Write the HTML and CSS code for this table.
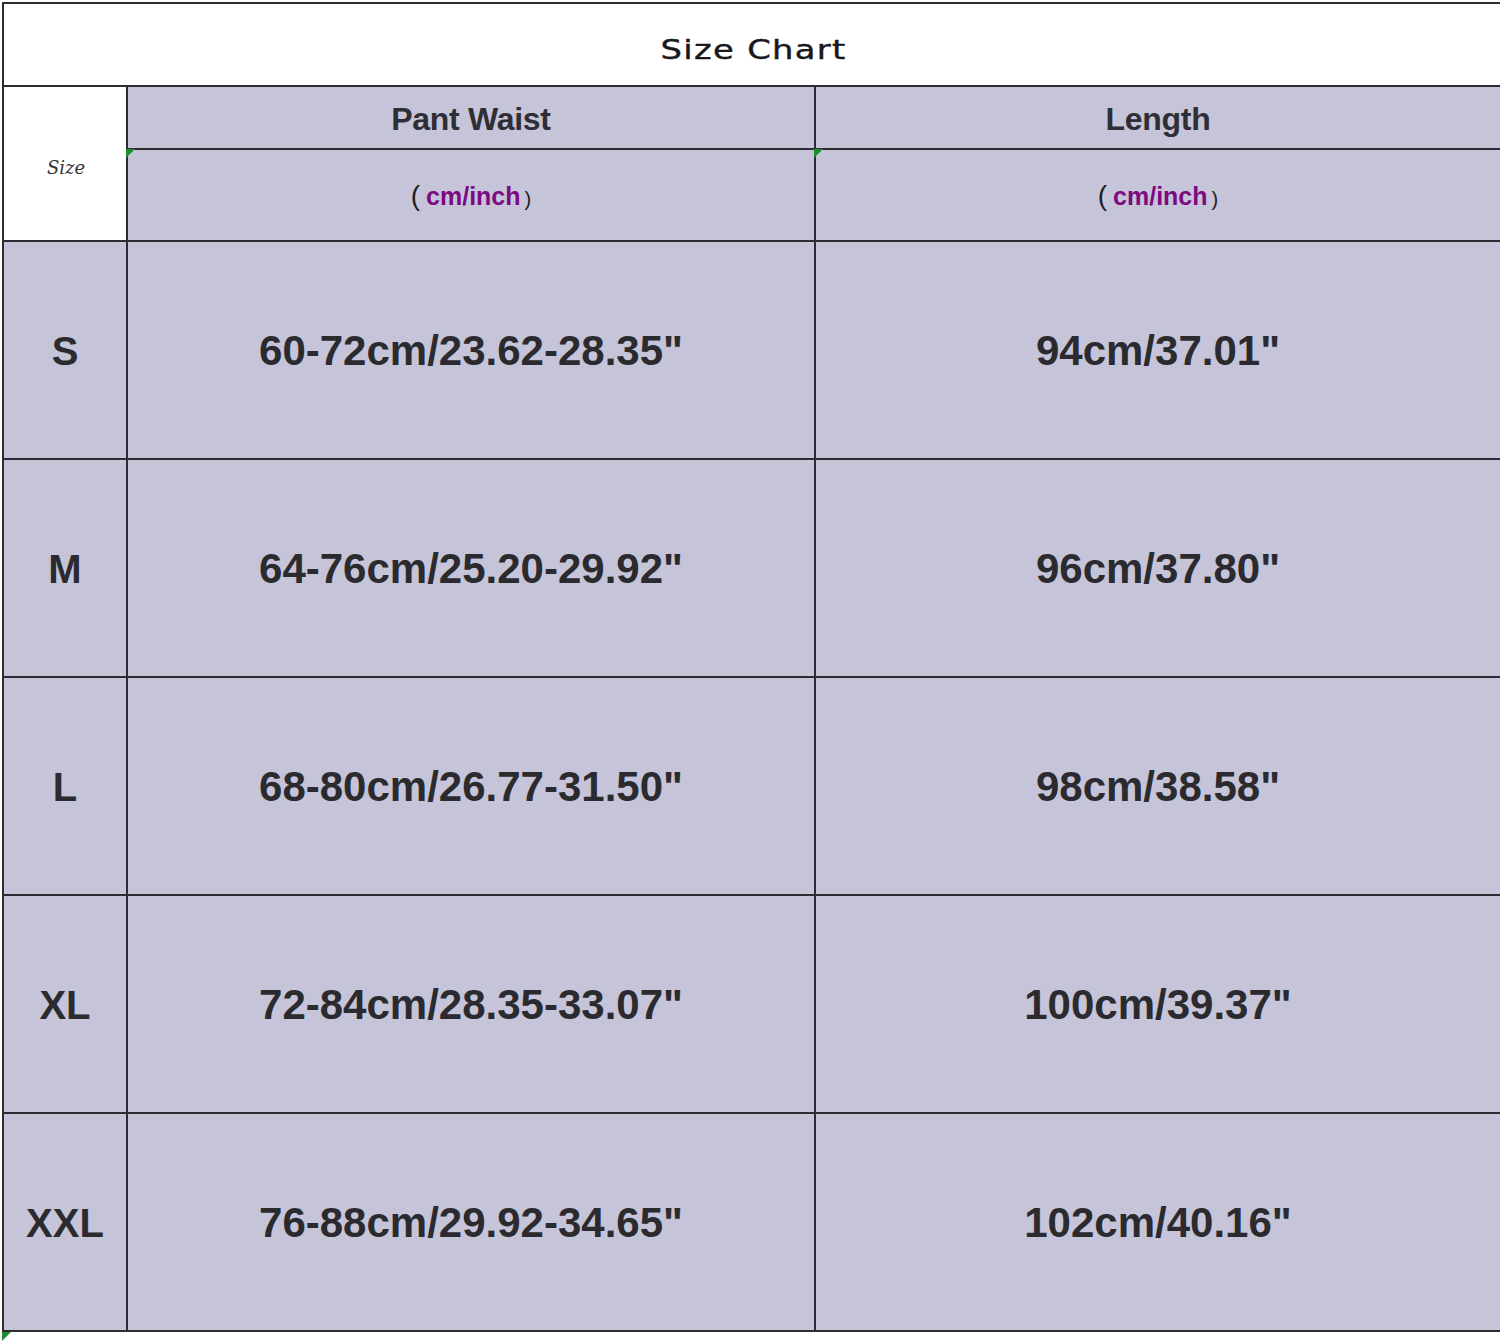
FILE: index.html
```html
<!DOCTYPE html>
<html>
<head>
<meta charset="utf-8">
<link rel="stylesheet" href="styles.css">
</head>
<body>
<div class="chart">
  <div class="grid">
    <div class="title"><span class="title-text">Size Chart</span></div>
    <div class="size-head"><span>Size</span></div>
    <div class="head">Pant Waist</div>
    <div class="head">Length</div>
    <div class="unit"><i class="tri"></i><span class="par">(</span><span class="cm">cm/inch</span><span class="par small">)</span></div>
    <div class="unit"><i class="tri"></i><span class="par">(</span><span class="cm">cm/inch</span><span class="par small">)</span></div>

    <div class="sz">S</div><div class="val">60-72cm/23.62-28.35"</div><div class="val">94cm/37.01"</div>
    <div class="sz">M</div><div class="val">64-76cm/25.20-29.92"</div><div class="val">96cm/37.80"</div>
    <div class="sz">L</div><div class="val">68-80cm/26.77-31.50"</div><div class="val">98cm/38.58"</div>
    <div class="sz">XL</div><div class="val">72-84cm/28.35-33.07"</div><div class="val">100cm/39.37"</div>
    <div class="sz">XXL</div><div class="val">76-88cm/29.92-34.65"</div><div class="val">102cm/40.16"</div>
  </div>
  <i class="tri corner"></i>
</div>
</body>
</html>
```
FILE: styles.css
```css
html, body {
  margin: 0;
  padding: 0;
  background: #ffffff;
  overflow: hidden;
}
body {
  width: 1500px;
  height: 1344px;
  font-family: "Liberation Sans", Arial, sans-serif;
  color: #2a2a2e;
}
.chart {
  position: relative;
  margin: 2px 0 0 2px;
  width: 1498px;
}
.grid {
  display: grid;
  grid-template-columns: 122px 686px 1fr;
  grid-template-rows: 81px 61px 90px repeat(5, 216px);
  gap: 2px;
  padding: 2px 0 2px 2px;
  background: #2c2c33;
}
.grid > div {
  display: flex;
  align-items: center;
  justify-content: center;
  background: #c5c4d8;
  position: relative;
}
.grid > .title {
  grid-column: 1 / 4;
  background: #ffffff;
}
.title-text {
  display: inline-block;
  font-family: "DejaVu Sans", sans-serif;
  font-size: 26px;
  letter-spacing: 1px;
  color: #18181c;
  -webkit-text-stroke: 0.4px #18181c;
  transform: scaleX(1.3);
  margin-left: 4px;
  padding-top: 10px;
}
.grid > .size-head {
  grid-row: 2 / 4;
  background: #ffffff;
}
.size-head span {
  font-family: "DejaVu Serif", serif;
  font-style: italic;
  font-size: 18px;
  color: #333;
  padding-top: 8px;
  margin-left: 2px;
}
.head {
  font-size: 32px;
  font-weight: bold;
  letter-spacing: -0.3px;
  color: #2e2e34;
  padding-top: 3px;
}
.unit {
  padding-top: 2px;
}
.par {
  font-size: 28px;
  color: #1e1e1e;
  margin-right: 6px;
}
.par.small {
  font-size: 20px;
  margin: 0 0 0 4px;
  padding-top: 6px;
}
.cm {
  font-size: 25px;
  font-weight: bold;
  color: #7d0a80;
}
.sz {
  font-size: 40px;
  font-weight: bold;
  color: #2b2b2f;
  padding-top: 2px;
}
.val {
  font-size: 42px;
  font-weight: bold;
  color: #2b2b2f;
  padding-top: 2px;
}
.tri {
  position: absolute;
  width: 0;
  height: 0;
  border-top: 9px solid #1f8c2d;
  border-right: 9px solid transparent;
}
.unit .tri {
  top: -1px;
  left: -2px;
}
.tri.corner {
  left: 0;
  bottom: -9px;
}
```
